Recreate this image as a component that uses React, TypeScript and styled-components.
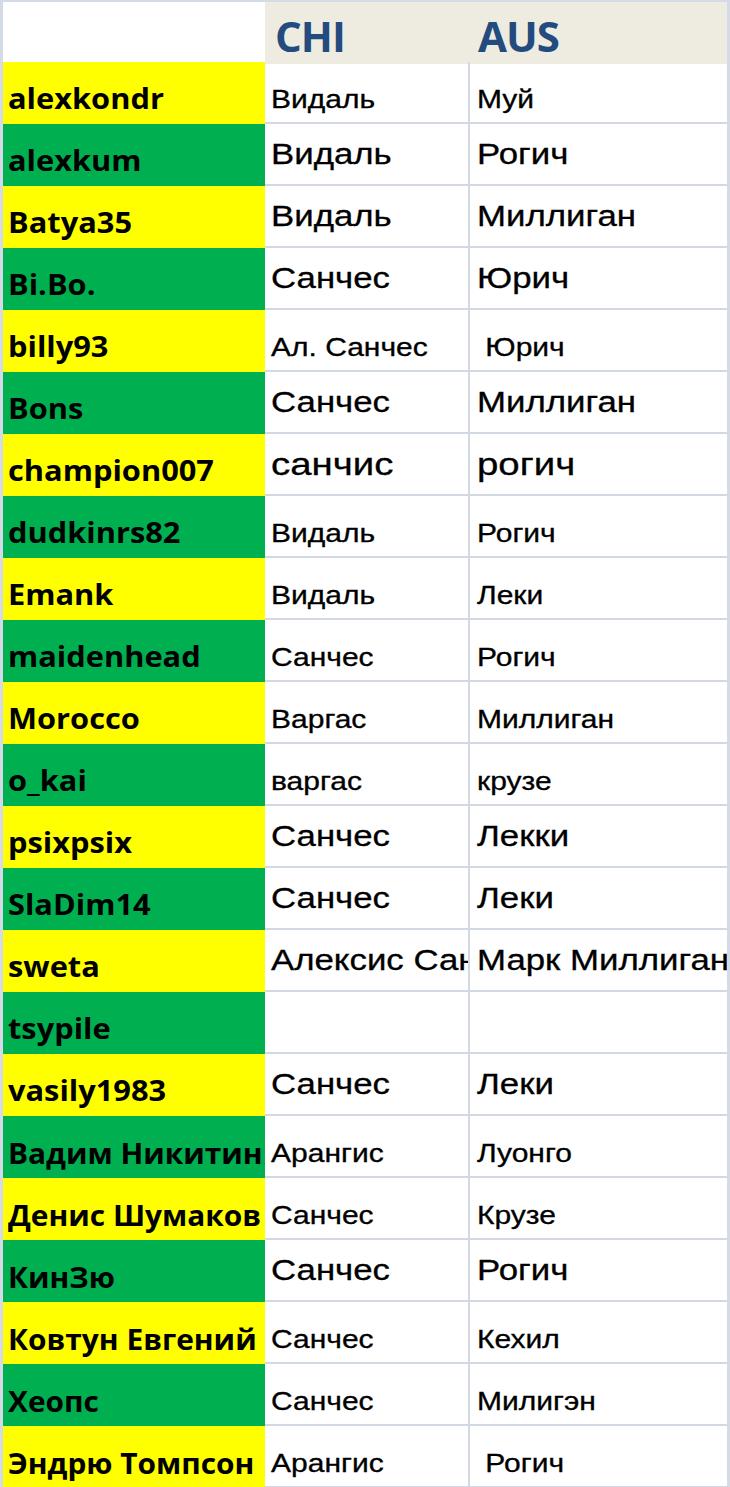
import React from 'react';
import styled, { createGlobalStyle } from 'styled-components';

type Size = 'sm' | 'lg' | 'xl';

const GlobalStyle = createGlobalStyle`
  html, body {
    margin: 0;
    padding: 0;
    background: #ffffff;
  }
  * {
    box-sizing: border-box;
  }
`;

const Sheet = styled.div`
  width: 730px;
  height: 1487px;
  overflow: hidden;
  border-top: 2px solid #d5dbe6;
  border-left: 3px solid #d5dbe6;
  border-right: 3px solid #d5dbe6;
  background: #ffffff;
`;

const Row = styled.div`
  display: grid;
  grid-template-columns: 262px 205px 257px;
  height: 62px;
`;

const HeaderRow = styled(Row)`
  height: 60px;
`;

const Corner = styled.div`
  background: #ffffff;
`;

const HeaderCell = styled.div<{ $pad: number }>`
  display: flex;
  align-items: center;
  padding: 5px 0 0 ${(p) => p.$pad}px;
  background: #eeece1;
  font-family: 'Open Sans', 'Liberation Sans', sans-serif;
  font-weight: 700;
  font-size: 42px;
  color: #234b7d;
  letter-spacing: -1px;
`;

const NameCell = styled.div<{ $tone: 'yellow' | 'green' }>`
  display: flex;
  align-items: center;
  padding: 10px 0 0 5px;
  overflow: hidden;
  background: ${(p) => (p.$tone === 'yellow' ? '#ffff00' : '#00b050')};
`;

// latin nicks are a touch wider in the shot, cyrillic ones fill the column
const NameText = styled.span<{ $cyr: boolean }>`
  display: inline-block;
  white-space: nowrap;
  font-family: 'Open Sans', 'Liberation Sans', sans-serif;
  font-weight: 700;
  font-size: ${(p) => (p.$cyr ? 29 : 28)}px;
  color: #000000;
  transform: scaleX(${(p) => (p.$cyr ? 1.03 : 1.1)});
  transform-origin: left center;
`;

const ValueCell = styled.div<{ $size: Size; $first: boolean }>`
  display: flex;
  align-items: center;
  padding: ${(p) => (p.$size === 'sm' ? '14px' : '0')} 0 0 ${(p) => (p.$first ? 6 : 7)}px;
  overflow: hidden;
  border-bottom: 2px solid #d3d9e4;
  border-right: ${(p) => (p.$first ? '2px solid #d3d9e4' : 'none')};
`;

const ValueText = styled.span<{ $size: Size }>`
  display: inline-block;
  white-space: pre;
  font-family: 'Liberation Sans', Arial, sans-serif;
  font-size: ${(p) => (p.$size === 'sm' ? 25 : p.$size === 'lg' ? 29 : 32)}px;
  color: #000000;
  -webkit-text-stroke: 0.3px #000000;
  transform: scaleX(1.2);
  transform-origin: left center;
`;

type Entry = { name: string; chi: string; aus: string; size: Size };

const entries: Entry[] = [
  { name: 'alexkondr', chi: 'Видаль', aus: 'Муй', size: 'sm' },
  { name: 'alexkum', chi: 'Видаль', aus: 'Рогич', size: 'lg' },
  { name: 'Batya35', chi: 'Видаль', aus: 'Миллиган', size: 'lg' },
  { name: 'Bi.Bo.', chi: 'Санчес', aus: 'Юрич', size: 'lg' },
  { name: 'billy93', chi: 'Ал. Санчес', aus: ' Юрич', size: 'sm' },
  { name: 'Bons', chi: 'Санчес', aus: 'Миллиган', size: 'lg' },
  { name: 'champion007', chi: 'санчис', aus: 'рогич', size: 'xl' },
  { name: 'dudkinrs82', chi: 'Видаль', aus: 'Рогич', size: 'sm' },
  { name: 'Emank', chi: 'Видаль', aus: 'Леки', size: 'sm' },
  { name: 'maidenhead', chi: 'Санчес', aus: 'Рогич', size: 'sm' },
  { name: 'Morocco', chi: 'Варгас', aus: 'Миллиган', size: 'sm' },
  { name: 'o_kai', chi: 'варгас', aus: 'крузе', size: 'sm' },
  { name: 'psixpsix', chi: 'Санчес', aus: 'Лекки', size: 'lg' },
  { name: 'SlaDim14', chi: 'Санчес', aus: 'Леки', size: 'lg' },
  { name: 'sweta', chi: 'Алексис Санчес', aus: 'Марк Миллиган', size: 'lg' },
  { name: 'tsypile', chi: '', aus: '', size: 'lg' },
  { name: 'vasily1983', chi: 'Санчес', aus: 'Леки', size: 'lg' },
  { name: 'Вадим Никитин', chi: 'Арангис', aus: 'Луонго', size: 'sm' },
  { name: 'Денис Шумаков', chi: 'Санчес', aus: 'Крузе', size: 'sm' },
  { name: 'КинЗю', chi: 'Санчес', aus: 'Рогич', size: 'lg' },
  { name: 'Ковтун Евгений', chi: 'Санчес', aus: 'Кехил', size: 'sm' },
  { name: 'Хеопс', chi: 'Санчес', aus: 'Милигэн', size: 'sm' },
  { name: 'Эндрю Томпсон', chi: 'Арангис', aus: ' Рогич', size: 'sm' },
];

const isCyrillic = (s: string) => /[А-Яа-яЁё]/.test(s);

const App: React.FC = () => {
  return (
    <>
      <GlobalStyle />
      <Sheet>
        <HeaderRow>
          <Corner />
          <HeaderCell $pad={10}>CHI</HeaderCell>
          <HeaderCell $pad={8}>AUS</HeaderCell>
        </HeaderRow>
        {entries.map((e, i) => (
          <Row key={e.name}>
            <NameCell $tone={i % 2 === 0 ? 'yellow' : 'green'}>
              <NameText $cyr={isCyrillic(e.name)}>{e.name}</NameText>
            </NameCell>
            <ValueCell $size={e.size} $first>
              <ValueText $size={e.size}>{e.chi}</ValueText>
            </ValueCell>
            <ValueCell $size={e.size} $first={false}>
              <ValueText $size={e.size}>{e.aus}</ValueText>
            </ValueCell>
          </Row>
        ))}
      </Sheet>
    </>
  );
};

export default App;
